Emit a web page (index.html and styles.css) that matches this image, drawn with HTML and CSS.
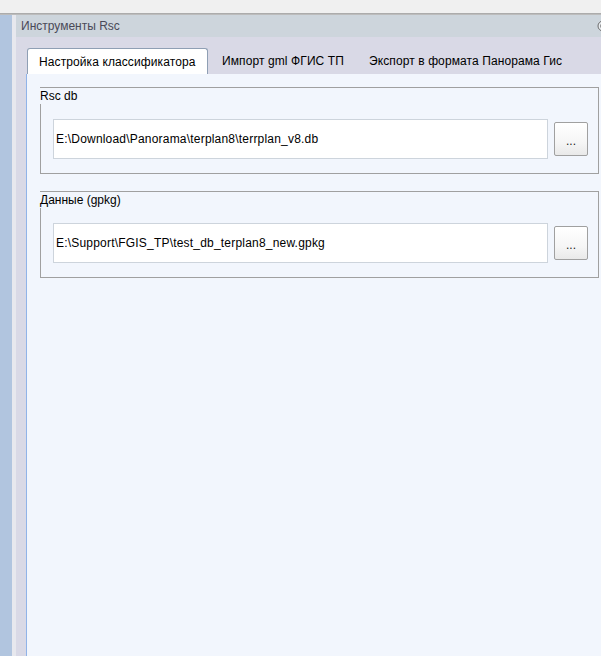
FILE: index.html
```html
<!DOCTYPE html>
<html lang="ru">
<head>
<meta charset="utf-8">
<title>Инструменты Rsc</title>
<link rel="stylesheet" href="styles.css">
</head>
<body>
<div class="topbar"></div>
<div class="topline"></div>
<div class="main">
  <div class="leftblue"></div>
  <div class="leftgap"></div>
  <div class="panel">
    <div class="header">
      <span class="header-title">Инструменты Rsc</span>
      <svg class="header-icon" width="12" height="12" viewBox="0 0 12 12"><circle cx="6" cy="6" r="5" fill="#e8ecf0" stroke="#6b6b6b" stroke-width="1"/><circle cx="6" cy="6" r="2.5" fill="none" stroke="#8a8a8a" stroke-width="1"/></svg>
    </div>
    <div class="tabcontrol">
      <div class="tabs">
        <div class="tab active">Настройка классификатора</div>
        <div class="tab second">Импорт gml ФГИС ТП</div>
        <div class="tab third">Экспорт в формата Панорама Гис</div>
      </div>
      <div class="page">
        <div class="group">
          <div class="group-title">Rsc db</div>
          <div class="group-body">
            <div class="textbox">E:\Download\Panorama\terplan8\terrplan_v8.db</div>
            <button class="browse">...</button>
          </div>
        </div>
        <div class="group second-group">
          <div class="group-title">Данные (gpkg)</div>
          <div class="group-body">
            <div class="textbox">E:\Support\FGIS_TP\test_db_terplan8_new.gpkg</div>
            <button class="browse">...</button>
          </div>
        </div>
      </div>
    </div>
  </div>
</div>
</body>
</html>
```

FILE: styles.css
```css
* { box-sizing: border-box; }
html, body { margin: 0; padding: 0; height: 100%; overflow: hidden; }
body {
  font-family: "Liberation Sans", Arial, sans-serif;
  font-size: 12px;
  color: #000;
  background: #f2f6fd;
  display: flex;
  flex-direction: column;
}
.topbar { height: 13px; background: #f0f0f0; flex: none; }
.topline { height: 2px; background: linear-gradient(#a4a4a4, #c4c4c4); flex: none; }
.main { flex: 1; display: flex; min-height: 0; }
.leftblue { width: 12px; background: #b1c5df; flex: none; }
.leftgap { width: 4px; background: #e7e8ee; flex: none; }
.panel { flex: 1; display: flex; flex-direction: column; min-width: 0; }
.header {
  height: 22px;
  background: #cdd5dc;
  display: flex;
  align-items: center;
  justify-content: space-between;
  padding-left: 5px;
  flex: none;
  overflow: hidden;
}
.header-title { color: #4a4a58; font-size: 12px; }
.header-icon { margin-right: -8px; flex: none; }
.tabcontrol {
  flex: 1;
  background: #d9d9e6;
  padding-left: 10px;
  display: flex;
  flex-direction: column;
}
.tabs {
  height: 37px;
  display: flex;
  align-items: flex-end;
  padding-left: 1px;
  flex: none;
}
.tab {
  height: 26px;
  display: flex;
  align-items: center;
  white-space: nowrap;
  color: #000;
  letter-spacing: 0.1px;
}
.tab.active {
  width: 181px;
  padding-left: 11px;
  background: #fff;
  border: 1px solid #8f9fb4;
  border-bottom: none;
  border-radius: 3px 3px 0 0;
}
.tab.second { padding-left: 14px; width: 161px; }
.tab.third { padding-left: 0; }
.page {
  flex: 1;
  background: #f2f6fd;
  border-left: 1px solid #90b3e8;
  padding: 13px 2px 0 13px;
}
.group {
  border-top: 1px solid #a0a0a0;
  border-right: 1px solid #a0a0a0;
  border-bottom: 1px solid #a0a0a0;
}
.second-group { margin-top: 17px; }
.group-title {
  height: 16px;
  line-height: 14px;
  padding-top: 1px;
  color: #000;
}
.group-body {
  border-left: 1px solid #a0a0a0;
  padding: 15px 10px 14px 12px;
  display: flex;
  align-items: center;
  gap: 6px;
}
.textbox {
  flex: 1;
  height: 40px;
  background: #fff;
  border: 1px solid #cdd4dc;
  display: flex;
  align-items: center;
  padding-left: 2px;
  white-space: nowrap;
  overflow: hidden;
  letter-spacing: 0.2px;
}
.browse {
  width: 34px;
  height: 34px;
  flex: none;
  border: 1px solid #a0a0a0;
  border-radius: 2px;
  background: linear-gradient(#ffffff 0%, #f6f6f6 60%, #e9e9e9 100%);
  font-family: "Liberation Sans", Arial, sans-serif;
  font-size: 12px;
  font-weight: normal;
  color: #1a1a1a;
  padding: 4px 0 0 0;
  line-height: 1;
}
```
